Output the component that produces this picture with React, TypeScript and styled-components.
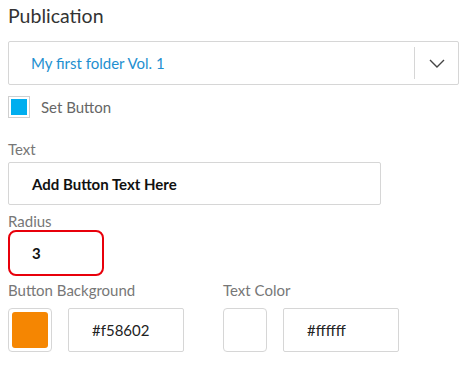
import React from "react";
import styled, { createGlobalStyle } from "styled-components";

const Global = createGlobalStyle`
  html, body { margin: 0; padding: 0; background: #fff; }
  body { font-family: Lato, "Open Sans", sans-serif; }
  * { box-sizing: border-box; }
`;

const Panel = styled.div`
  width: 468px;
  height: 367px;
  padding: 4px 8px 0 8px;
  display: flex;
  flex-direction: column;
`;

const Title = styled.div`
  font-size: 19.5px;
  line-height: 24px;
  color: #333;
  height: 37px;
`;

const Select = styled.div`
  width: 451px;
  height: 44px;
  border: 1px solid #d6d6d6;
  border-radius: 2px;
  display: flex;
  align-items: center;
`;

const SelectValue = styled.div`
  flex: 1;
  padding-left: 22px;
  font-size: 15px;
  color: #1e8fd0;
`;

const SelectArrow = styled.div`
  width: 44px;
  height: 32px;
  border-left: 1px solid #d6d6d6;
  display: flex;
  align-items: center;
  justify-content: center;
`;

const CheckRow = styled.div`
  display: flex;
  align-items: center;
  gap: 11px;
  margin-top: 11px;
  height: 22px;
`;

const CheckBox = styled.div`
  width: 22px;
  height: 22px;
  border: 1px solid #cfcfcf;
  padding: 2px;
`;

const CheckFill = styled.div`
  width: 100%;
  height: 100%;
  background: #00aeef;
`;

const CheckLabel = styled.span`
  font-size: 15px;
  color: #666;
`;

const Label = styled.div<{ $mt: number; $mb: number }>`
  font-size: 15px;
  line-height: 18px;
  color: #777;
  margin-top: ${(p) => p.$mt}px;
  margin-bottom: ${(p) => p.$mb}px;
`;

const Input = styled.div<{ $w: number; $red?: boolean }>`
  width: ${(p) => p.$w}px;
  height: ${(p) => (p.$red ? 46 : 43)}px;
  border: ${(p) => (p.$red ? "2px solid #e8000b" : "1px solid #d6d6d6")};
  border-radius: ${(p) => (p.$red ? 8 : 2)}px;
  display: flex;
  align-items: center;
  padding-left: ${(p) => (p.$red ? 22 : 23)}px;
  font-size: 15px;
  font-weight: 700;
  color: #111;
`;

const ColorRow = styled.div`
  display: flex;
  gap: 39px;
`;

const ColorGroup = styled.div`
  display: flex;
  flex-direction: column;
`;

const ColorInputs = styled.div`
  display: flex;
  gap: 16px;
`;

const Swatch = styled.div<{ $c: string }>`
  width: 44px;
  height: 44px;
  border: 1px solid #d6d6d6;
  border-radius: 4px;
  padding: 3px;
  & > div {
    width: 100%;
    height: 100%;
    border-radius: 3px;
    background: ${(p) => p.$c};
  }
`;

const Hex = styled.div`
  width: 116px;
  height: 44px;
  border: 1px solid #d6d6d6;
  border-radius: 2px;
  display: flex;
  align-items: center;
  padding-left: 23px;
  font-size: 15px;
  color: #222;
`;

const ColorLabel = styled.div`
  font-size: 15px;
  line-height: 18px;
  color: #777;
  margin-top: 5px;
  margin-bottom: 9px;
`;

export default function App() {
  return (
    <>
      <Global />
      <Panel>
        <Title>Publication</Title>
        <Select>
          <SelectValue>My first folder Vol. 1</SelectValue>
          <SelectArrow>
            <svg width="16" height="9" viewBox="0 0 16 9">
              <path d="M1 1 L8 8 L15 1" fill="none" stroke="#444" strokeWidth="1.4" />
            </svg>
          </SelectArrow>
        </Select>
        <CheckRow>
          <CheckBox>
            <CheckFill />
          </CheckBox>
          <CheckLabel>Set Button</CheckLabel>
        </CheckRow>
        <Label $mt={22} $mb={4}>Text</Label>
        <Input $w={373}>Add Button Text Here</Input>
        <Label $mt={7} $mb={0}>Radius</Label>
        <Input $w={96} $red>3</Input>
        <ColorRow>
          <ColorGroup>
            <ColorLabel>Button Background</ColorLabel>
            <ColorInputs>
              <Swatch $c="#f58602"><div /></Swatch>
              <Hex>#f58602</Hex>
            </ColorInputs>
          </ColorGroup>
          <ColorGroup>
            <ColorLabel>Text Color</ColorLabel>
            <ColorInputs>
              <Swatch $c="#ffffff"><div /></Swatch>
              <Hex>#ffffff</Hex>
            </ColorInputs>
          </ColorGroup>
        </ColorRow>
      </Panel>
    </>
  );
}
